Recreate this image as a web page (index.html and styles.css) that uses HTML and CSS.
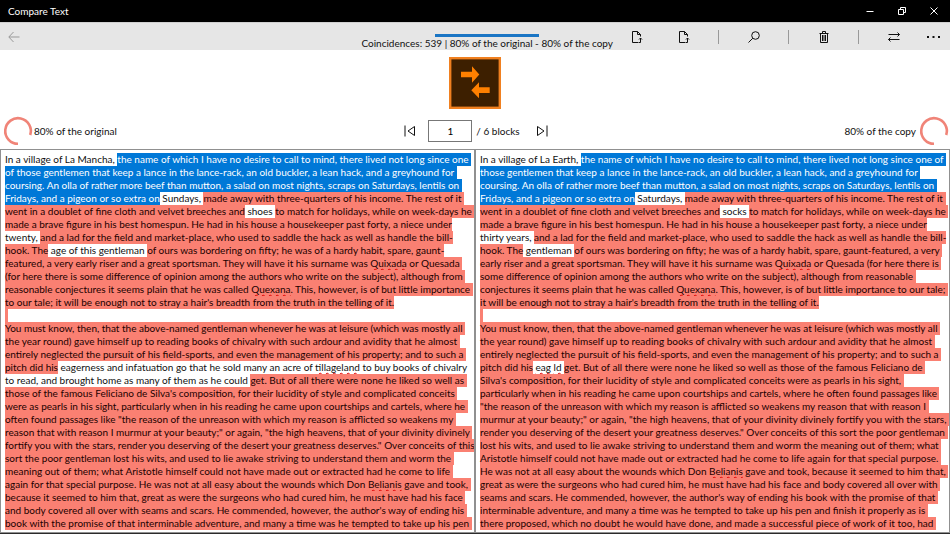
FILE: index.html
```html
<!DOCTYPE html>
<html lang="en">
<head>
    <meta charset="UTF-8">
    <meta name="viewport" content="width=device-width, initial-scale=1.0">
    <title>Compare Text</title>
    <link rel="stylesheet" href="styles.css">
</head>
<body>
    <!-- Title bar -->
    <header class="titlebar">
        <h1>Compare Text</h1>
        <div class="window-buttons">
            <button type="button" aria-label="Minimize">
                <svg width="8" height="8" viewBox="0 0 8 8"><path d="M0.5 4.5h7"/></svg>
            </button>
            <button type="button" aria-label="Restore">
                <svg width="8" height="8" viewBox="0 0 8 8"><path d="M0.5 2.5h5v5h-5zM2.5 2.5v-2h5v5h-2"/></svg>
            </button>
            <button type="button" aria-label="Close">
                <svg width="8" height="8" viewBox="0 0 8 8"><path d="M0.5 0.5l7 7M7.5 0.5l-7 7"/></svg>
            </button>
        </div>
    </header>

    <!-- Toolbar -->
    <div class="toolbar">
        <button type="button" class="back" aria-label="Back" disabled>
            <svg width="12" height="12" viewBox="0 0 12 12"><path d="M11.5 6H1M5.5 1L0.8 6l4.7 5"/></svg>
        </button>

        <div class="status">
            <div class="status-bar"></div>
            <p>Coincidences: 539 | 80% of the original - 80% of the copy</p>
        </div>

        <button type="button" aria-label="Open original">
            <svg width="12" height="12" viewBox="0 0 12 12"><path d="M7 11.500H1.500v-11H6.500l3 3v2M6.500 0.500v3h3M9.500 11.500V7M8 8.500L9.500 7 11 8.500M7.500 11.500h2"/></svg>
        </button>
        <button type="button" aria-label="Open copy">
            <svg width="12" height="12" viewBox="0 0 12 12"><path d="M7 11.500H1.500v-11H6.500l3 3v2M6.500 0.500v3h3M9.500 11.500V7M8 8.500L9.500 7 11 8.500M7.500 11.500h2"/></svg>
        </button>
        <span class="separator"></span>
        <button type="button" aria-label="Search">
            <svg width="12" height="12" viewBox="0 0 12 12"><circle cx="7.5" cy="4.5" r="3.8"/><path d="M4.8 7.2L0.5 11.5"/></svg>
        </button>
        <span class="separator"></span>
        <button type="button" aria-label="Delete">
            <svg width="10" height="12" viewBox="0 0 10 12"><path d="M0.5 2.5h9M3.5 2.5v-2h3v2M1.5 2.5v9h7v-9M3.5 4v6M5 4v6M6.5 4v6"/></svg>
        </button>
        <span class="separator"></span>
        <button type="button" aria-label="Swap texts">
            <svg width="12" height="10" viewBox="0 0 12 10"><path d="M0.5 2.5h11M9.5 0.5l2 2-2 2M11.5 7.5h-11M2.5 5.5l-2 2 2 2"/></svg>
        </button>
        <button type="button" class="more" aria-label="More">
            <svg class="solid" width="13" height="2" viewBox="0 0 13 2"><path d="M0 0h2v2H0zM5.5 0h2v2h-2zM11 0h2v2h-2z"/></svg>
        </button>
    </div>

    <!-- Logo, percentages and block navigation -->
    <section class="summary">
        <svg class="logo" width="52" height="52" viewBox="0 0 52 52">
            <rect x="1.2" y="1.2" width="49.600" height="49.600"/>
            <path d="M12 14.700h11V9.300l7.300 8.200-7.300 8.200v-5.400H12zM40.700 30.300H30v-5l-7.700 8 7.700 8V36h10.700z"/>
        </svg>
        <div class="summary-row">
            <div class="percent">
                <svg class="ring" width="28" height="28" viewBox="0 0 28 28"><path d="M14 26.800A12.800 12.800 0 1 1 26.200 18"/></svg>
                <span>80% of the original</span>
            </div>
            <form class="block-nav">
                <button type="button" aria-label="Previous block">
                    <svg width="12" height="12" viewBox="0 0 12 12"><path d="M1 0.5v11M10.500 1.500v9L4 6z"/></svg>
                </button>
                <input type="text" id="block" value="1">
                <label for="block">/ 6 blocks</label>
                <button type="button" aria-label="Next block">
                    <svg width="12" height="12" viewBox="0 0 12 12"><path d="M11 0.500v11M1.500 1.500v9L8 6z"/></svg>
                </button>
            </form>
            <div class="percent percent-copy">
                <span>80% of the copy</span>
                <svg class="ring" width="28" height="28" viewBox="0 0 28 28"><path d="M14 26.800A12.800 12.800 0 1 1 26.200 18"/></svg>
            </div>
        </div>
    </section>

    <!-- Original and copy -->
    <main class="panes">
        <div class="pane" role="textbox" aria-multiline="true" aria-label="Original" contenteditable="true" spellcheck="false">In a village of La Mancha, <mark class="current">the name of which I have no desire to call to mind, there lived not long since one 
of those gentlemen that keep a lance in the lance-rack, an old buckler, a lean hack, and a greyhound for 
coursing. An olla of rather more beef than mutton, a salad on most nights, scraps on Saturdays, lentils on 
Fridays, and a pigeon or so extra on</mark> Sundays, <mark>made away with three-quarters of his income. The rest of it 
went in a doublet of fine cloth and velvet breeches and</mark> shoes <mark>to match for holidays, while on week-days he 
made a brave figure in his best homespun. He had in his house a housekeeper past forty, a niece under</mark>
twenty, <mark>and a lad for the field and market-place, who used to saddle the hack as well as handle the bill-
hook. The</mark> age of this gentleman <mark>of ours was bordering on fifty; he was of a hardy habit, spare, gaunt-
featured, a very early riser and a great sportsman. They will have it his surname was <span class="typo">Quixada</span> or Quesada 
(for here there is some difference of opinion among the authors who write on the subject), although from 
reasonable conjectures it seems plain that he was called <span class="typo">Quexana</span>. This, however, is of but little importance 
to our tale; it will be enough not to stray a hair's breadth from the truth in the telling of it.
 
You must know, then, that the above-named gentleman whenever he was at leisure (which was mostly all 
the year round) gave himself up to reading books of chivalry with such ardour and avidity that he almost 
entirely neglected the pursuit of his field-sports, and even the management of his property; and to such a 
pitch did his</mark> eagerness and infatuation go that he sold many an acre of <span class="typo">tillageland</span> to buy books of chivalry 
to read, and brought home as many of them as he could <mark>get. But of all there were none he liked so well as 
those of the famous Feliciano de Silva's composition, for their lucidity of style and complicated conceits 
were as pearls in his sight, particularly when in his reading he came upon courtships and cartels, where he 
often found passages like "the reason of the unreason with which my reason is afflicted so weakens my 
reason that with reason I murmur at your beauty;" or again, "the high heavens, that of your divinity divinely 
fortify you with the stars, render you deserving of the desert your greatness deserves." Over conceits of this 
sort the poor gentleman lost his wits, and used to lie awake striving to understand them and worm the 
meaning out of them; what Aristotle himself could not have made out or extracted had he come to life 
again for that special purpose. He was not at all easy about the wounds which Don <span class="typo">Belianis</span> gave and took, 
because it seemed to him that, great as were the surgeons who had cured him, he must have had his face 
and body covered all over with seams and scars. He commended, however, the author's way of ending his 
book with the promise of that interminable adventure, and many a time was he tempted to take up his pen </mark></div>
        <div class="pane" role="textbox" aria-multiline="true" aria-label="Copy" contenteditable="true" spellcheck="false">In a village of La Earth, <mark class="current">the name of which I have no desire to call to mind, there lived not long since one of 
those gentlemen that keep a lance in the lance-rack, an old buckler, a lean hack, and a greyhound for 
coursing. An olla of rather more beef than mutton, a salad on most nights, scraps on Saturdays, lentils on 
Fridays, and a pigeon or so extra on</mark> Saturdays, <mark>made away with three-quarters of his income. The rest of it 
went in a doublet of fine cloth and velvet breeches and</mark> socks <mark>to match for holidays, while on week-days he 
made a brave figure in his best homespun. He had in his house a housekeeper past forty, a niece under</mark>
thirty years, <mark>and a lad for the field and market-place, who used to saddle the hack as well as handle the bill-
hook. The</mark> gentleman <mark>of ours was bordering on fifty; he was of a hardy habit, spare, gaunt-featured, a very 
early riser and a great sportsman. They will have it his surname was <span class="typo">Quixada</span> or Quesada (for here there is 
some difference of opinion among the authors who write on the subject), although from reasonable 
conjectures it seems plain that he was called <span class="typo">Quexana</span>. This, however, is of but little importance to our tale; 
it will be enough not to stray a hair's breadth from the truth in the telling of it.
 
You must know, then, that the above-named gentleman whenever he was at leisure (which was mostly all 
the year round) gave himself up to reading books of chivalry with such ardour and avidity that he almost 
entirely neglected the pursuit of his field-sports, and even the management of his property; and to such a 
pitch did his</mark> <span class="typo">eag</span> <span class="typo">ld</span> <mark>get. But of all there were none he liked so well as those of the famous Feliciano de 
Silva's composition, for their lucidity of style and complicated conceits were as pearls in his sight, 
particularly when in his reading he came upon courtships and cartels, where he often found passages like 
"the reason of the unreason with which my reason is afflicted so weakens my reason that with reason I 
murmur at your beauty;" or again, "the high heavens, that of your divinity divinely fortify you with the stars, 
render you deserving of the desert your greatness deserves." Over conceits of this sort the poor gentleman 
lost his wits, and used to lie awake striving to understand them and worm the meaning out of them; what 
Aristotle himself could not have made out or extracted had he come to life again for that special purpose. 
He was not at all easy about the wounds which Don <span class="typo">Belianis</span> gave and took, because it seemed to him that, 
great as were the surgeons who had cured him, he must have had his face and body covered all over with 
seams and scars. He commended, however, the author's way of ending his book with the promise of that 
interminable adventure, and many a time was he tempted to take up his pen and finish it properly as is 
there proposed, which no doubt he would have done, and made a successful piece of work of it too, had </mark></div>
    </main>
</body>
</html>
```
FILE: styles.css
```css
* {
    margin: 0;
    padding: 0;
    box-sizing: border-box;
}

body {
    display: flex;
    flex-direction: column;
    height: 100vh;
    font-family: Lato, "Open Sans", sans-serif;
    font-size: 10px;
    line-height: 13px;
    color: #111;
    background-color: #fff;
    border-bottom: 1px solid #2b2b2b;
}

button {
    display: flex;
    align-items: center;
    justify-content: center;
    border: none;
    background: none;
    color: inherit;
    cursor: pointer;
}

svg {
    display: block;
    fill: none;
    stroke: currentColor;
}

/* Title bar */
.titlebar {
    display: flex;
    justify-content: space-between;
    align-items: center;
    height: 22px;
    padding-left: 8px;
    background-color: #000;
    color: #fff;
}

.titlebar h1 {
    font-size: 10px;
    font-weight: normal;
}

.window-buttons {
    display: flex;
}

.window-buttons button {
    width: 32px;
    height: 22px;
}

/* Toolbar */
.toolbar {
    display: flex;
    align-items: center;
    height: 28px;
    background-color: #e6e6e6;
    border-top: 1px solid #d0d0d0;
}

.toolbar button {
    width: 47px;
    height: 27px;
}

.toolbar .back {
    width: 28px;
    color: #999;
}

.toolbar .more {
    width: 33px;
}

.solid {
    fill: currentColor;
    stroke: none;
}

.separator {
    width: 23px;
    height: 14px;
    background: linear-gradient(#999, #999) center / 1px 100% no-repeat;
}

.status {
    margin-left: auto;
    padding-top: 11px;
    text-align: center;
}

.status-bar {
    width: 104px;
    height: 3px;
    margin: 0 auto;
    background-color: #1a75c4;
}

/* Summary */
.summary {
    padding-top: 7px;
}

.logo {
    margin: 0 auto;
}

.logo rect {
    fill: #3d1f00;
    stroke: #f08020;
    stroke-width: 2.4;
}

.logo path {
    fill: #ff8000;
    stroke: none;
}

.summary-row {
    display: grid;
    grid-template-columns: 1fr auto 1fr;
    align-items: center;
    padding: 8px 2px 4px 4px;
}

.percent {
    display: flex;
    align-items: center;
    gap: 2px;
}

.percent-copy {
    justify-content: flex-end;
    gap: 4px;
}

.ring {
    stroke: #f08478;
    stroke-width: 2.6;
    overflow: visible;
}

.block-nav {
    display: flex;
    align-items: center;
}

.block-nav button {
    width: 12px;
    height: 22px;
}

.block-nav input {
    width: 44px;
    height: 22px;
    margin: 0 4px 0 12px;
    border: 1px solid #777;
    font: inherit;
    text-align: center;
}

.block-nav label {
    margin-right: 16px;
}

/* Text panes */
.panes {
    flex: 1;
    display: grid;
    grid-template-columns: 1fr 1fr;
    min-height: 0;
}

.pane {
    padding: 3px 0 2px 4px;
    border: 1px solid #909090;
    overflow: hidden;
    white-space: pre;
    outline: none;
}

mark {
    padding-bottom: 1px;
    background-color: #fa8072;
    color: #200;
}

mark.current {
    background-color: #0078d7;
    color: #fff;
}

/* Spelling mistakes */
.typo {
    text-decoration: underline wavy #e00000 1px;
    text-decoration-skip-ink: none;
}
```
